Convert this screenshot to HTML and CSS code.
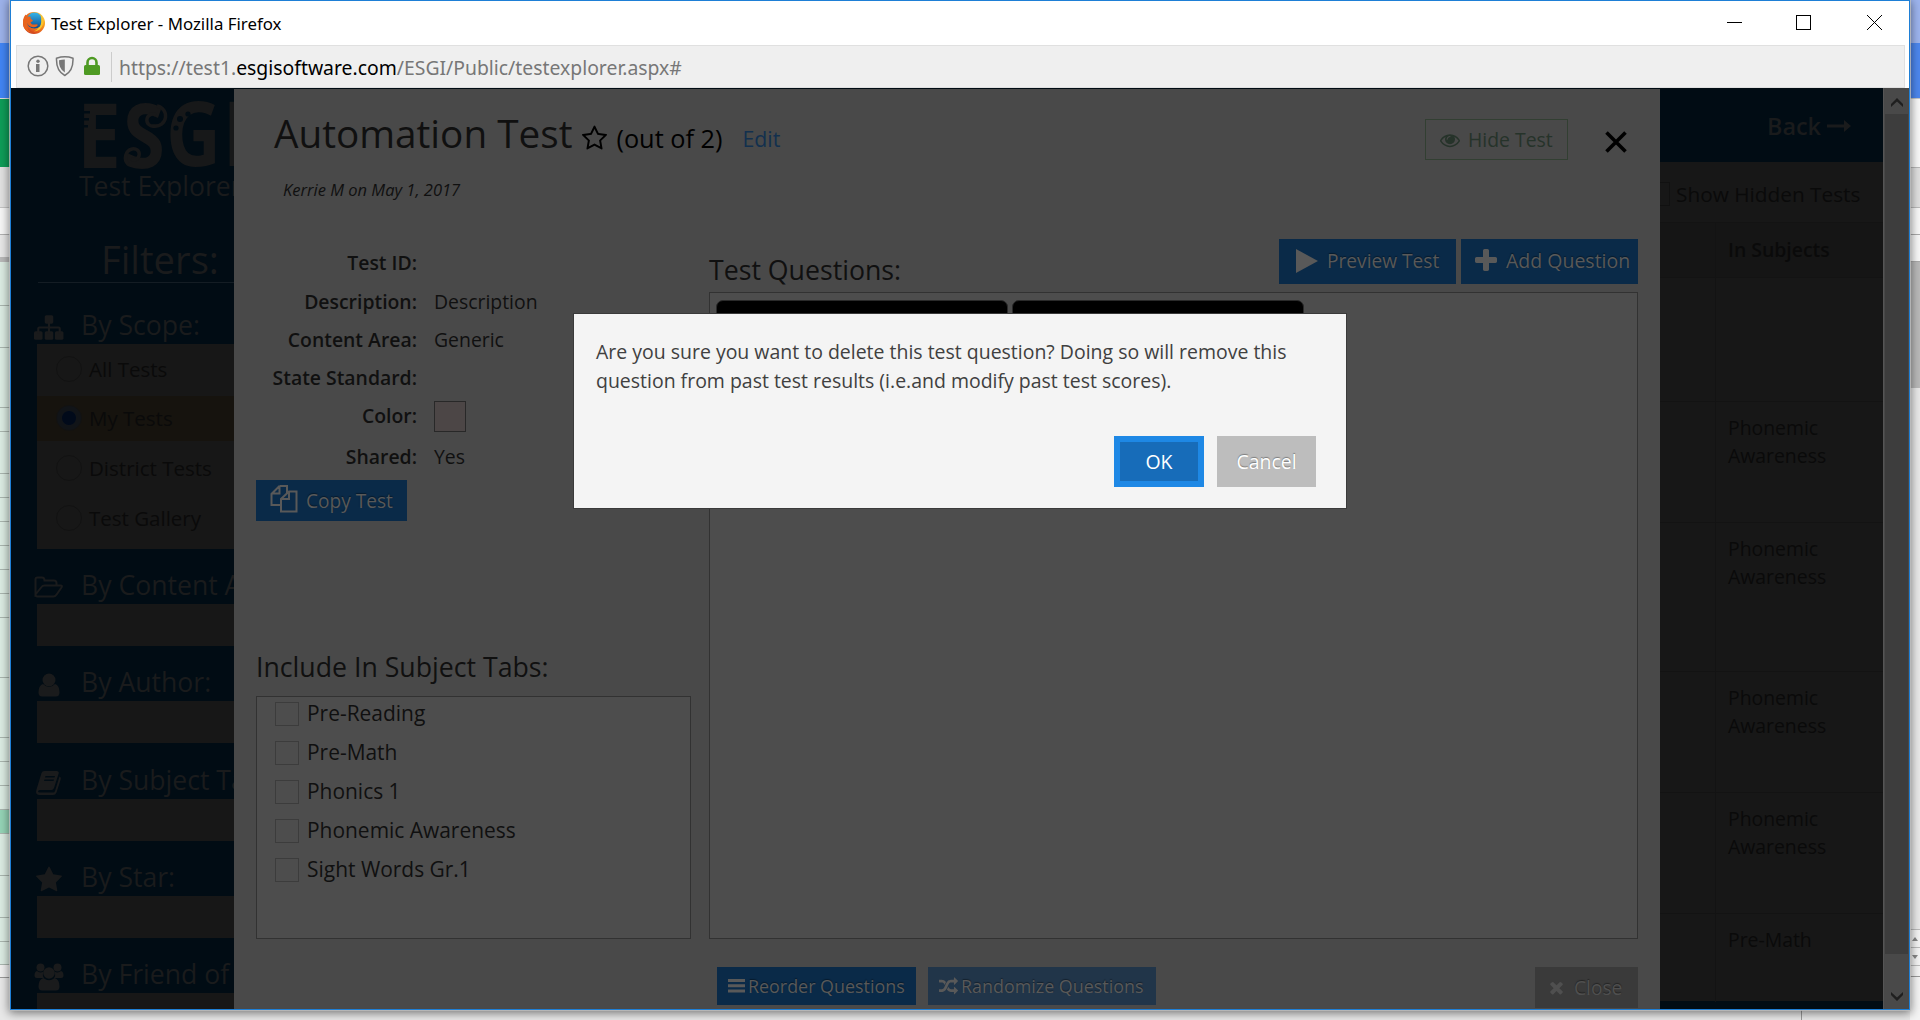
FILE: index.html
```html
<!DOCTYPE html>
<html lang="en">
<head>
<meta charset="utf-8">
<title>Test Explorer</title>
<link rel="stylesheet" href="styles.css">
</head>
<body>
<svg width="0" height="0" class="defs" aria-hidden="true">
  <symbol id="i-star-o" viewBox="0 0 1792 1792"><path d="M1201 1004l306-297-422-62-189-382-189 382-422 62 306 297-73 421 378-199 377 199zm527-357q0 22-26 48l-363 354 86 500q1 7 1 20 0 50-41 50-19 0-40-12l-449-236-449 236q-22 12-40 12-21 0-31.500-14.500t-10.500-35.500q0-6 2-20l86-500-364-354q-25-27-25-48 0-37 56-46l502-73 225-455q19-41 49-41t49 41l225 455 502 73q56 9 56 46z"/></symbol>
  <symbol id="i-star" viewBox="0 0 1792 1792"><path d="M1728 647q0 22-26 48l-363 354 86 500q1 7 1 20 0 21-10.500 35.500t-30.500 14.500q-19 0-40-12l-449-236-449 236q-22 12-40 12-21 0-31.500-14.500t-10.500-35.500q0-6 2-20l86-500-364-354q-25-27-25-48 0-37 56-46l502-73 225-455q19-41 49-41t49 41l225 455 502 73q56 9 56 46z"/></symbol>
  <symbol id="i-eye" viewBox="0 0 1792 1792"><path d="M1664 960q-152-236-381-353 61 104 61 225 0 185-131.500 316.500t-316.500 131.500-316.500-131.500-131.500-316.500q0-121 61-225-229 117-381 353 133 205 333.500 326.500t434.500 121.500 434.500-121.500 333.500-326.500zm-720-384q0-20-14-34t-34-14q-125 0-214.500 89.500t-89.500 214.500q0 20 14 34t34 14 34-14 14-34q0-86 61-147t147-61q20 0 34-14t14-34zm848 384q0 34-20 69-140 230-376.500 368.500t-499.500 138.500-499.500-139-376.500-368q-20-35-20-69t20-69q140-229 376.500-368t499.500-139 499.500 139 376.500 368q20 35 20 69z"/></symbol>
  <symbol id="i-plus" viewBox="0 0 1792 1792"><path d="M1600 736v192q0 40-28 68t-68 28h-416v416q0 40-28 68t-68 28h-192q-40 0-68-28t-28-68v-416h-416q-40 0-68-28t-28-68v-192q0-40 28-68t68-28h416v-416q0-40 28-68t68-28h192q40 0 68 28t28 68v416h416q40 0 68 28t28 68z"/></symbol>
  <symbol id="i-random" viewBox="0 0 1792 1792"><path d="M666 481q-60 92-137 273-22-45-37-72.500t-40.500-63.500-51-56.500-63-35-81.500-14.500h-224q-14 0-23-9t-9-23v-192q0-14 9-23t23-9h224q250 0 410 225zm1126 799q0 14-9 23l-320 320q-9 9-23 9-13 0-22.500-9.500t-9.500-22.500v-192q-32 0-85 .5t-81 1-73-1-71-5-64-10.500-63-18.500-58-28.500-59-40-55-53.500-56-69.500q59-93 136-273 22 45 37 72.500t40.500 63.500 51 56.500 63 35 81.500 14.500h256v-192q0-14 9-23t23-9q12 0 24 10l319 319q9 9 9 23zm0-896q0 14-9 23l-320 320q-9 9-23 9-13 0-22.500-9.500t-9.500-22.500v-192h-256q-48 0-87 15t-69 45-51 61.500-45 77.500q-32 62-78 171-29 66-49.500 111t-54 105-64 100-74 83-90 68.500-106.500 42-128 16.500h-224q-14 0-23-9t-9-23v-192q0-14 9-23t23-9h224q48 0 87-15t69-45 51-61.500 45-77.500q32-62 78-171 29-66 49.500-111t54-105 64-100 74-83 90-68.500 106.500-42 128-16.500h256v-192q0-14 9-23t23-9q12 0 24 10l319 319q9 9 9 23z"/></symbol>
  <symbol id="i-times" viewBox="0 0 1792 1792"><path d="M1490 1322q0 40-28 68l-136 136q-28 28-68 28t-68-28l-294-294-294 294q-28 28-68 28t-68-28l-136-136q-28-28-28-68t28-68l294-294-294-294q-28-28-28-68t28-68l136-136q28-28 68-28t68 28l294 294 294-294q28-28 68-28t68 28l136 136q28 28 28 68t-28 68l-294 294 294 294q28 28 28 68z"/></symbol>
</svg>

<div class="desktop">
  <div class="strip strip-left">
    <i class="l1"></i><i class="l2"></i><i class="l3"></i><i class="l4"></i><i class="l5"></i><i class="l6"></i>
    <i class="cell" style="height:44px"></i><i class="cell" style="height:42px"></i><i class="cell" style="height:60px"></i><i class="cell" style="height:24px"></i><i class="cell" style="height:42px"></i><i class="cell" style="height:24px"></i><i class="cell" style="height:24px"></i><i class="cell" style="height:24px"></i><i class="cell" style="height:24px"></i><i class="cell" style="height:24px"></i><i class="cell" style="height:24px"></i><i class="cell" style="height:60px"></i><i class="cell" style="height:60px"></i><i class="cell" style="height:24px"></i><i class="cell" style="height:24px"></i><i class="cell" style="height:24px"></i><i class="cell picked" style="height:24px"></i><i class="cell" style="height:42px"></i><i class="cell" style="height:42px"></i><i class="cell" style="height:24px"></i><i class="cell" style="height:23px"></i><i class="tabs"></i>
  </div>
  <div class="under"><i class="under-left"></i><i class="under-right"></i></div>
  <div class="strip strip-right">
    <i class="r1"></i><i class="r2"></i><i class="r3"></i><i class="r4"></i><i class="r5"></i><i class="r5"></i><i class="r6"></i><i class="r7"></i>
    <i class="spin"><svg width="6" height="4"><path d="M0 4L3 0L6 4z"/></svg></i><i class="spin"><svg width="6" height="4"><path d="M0 0L3 4L6 0z"/></svg></i><i class="r8"></i><i class="r9"></i>
  </div>
</div>

<div class="window">
  <div class="titlebar">
    <svg class="firefox" width="22" height="22" viewBox="0 0 22 22">
      <defs>
        <radialGradient id="fx" cx=".75" cy=".3" r=".85"><stop offset="0" stop-color="#ffe14d"/><stop offset=".4" stop-color="#f9a01b"/><stop offset=".75" stop-color="#e2571f"/><stop offset="1" stop-color="#b8321b"/></radialGradient>
        <linearGradient id="globe" x1="0" y1="0" x2="0" y2="1"><stop offset="0" stop-color="#35b4e8"/><stop offset="1" stop-color="#0b4a8e"/></linearGradient>
      </defs>
      <circle cx="11" cy="11" r="11" fill="url(#fx)"/>
      <circle cx="11.500" cy="8.600" r="8" fill="url(#globe)"/>
      <path d="M1 5L2.500 2.500L4 5Q6 3.800 8 5Q6.500 6.500 8.500 7.200L10 8.500Q9 10 7.500 10Q8 13 12 12.500Q14 12 15 13Q13 16 9 15Q5 14 4.500 11Q3 18 9 21Q0 19 0 11Q0 7 1 5z" fill="#e8641d"/>
      <path d="M17.500 3Q21 6 20 12Q18 19 11 19.500Q18 16 18.200 10Q18.500 6 17.500 3z" fill="#fbc52d"/>
    </svg>
    <span class="window-title">Test Explorer - Mozilla Firefox</span>
    <svg class="controls" width="156" height="16" viewBox="0 0 156 16" shape-rendering="crispEdges">
      <path d="M0 7.500H15" stroke="#000"/>
      <rect x="69.500" y=".5" width="14" height="14" fill="none" stroke="#000"/>
      <path d="M140 0l15 15M155 0l-15 15" stroke="#000" shape-rendering="auto"/>
    </svg>
  </div>
  <div class="urlbar">
    <svg class="url-icons" width="74" height="22" viewBox="0 0 74 22">
      <circle cx="11" cy="11" r="9.800" fill="none" stroke="#777" stroke-width="1.500"/>
      <circle cx="11" cy="6.300" r="1.700" fill="#777"/><path d="M9 9h3.500v8H9z" fill="#777"/>
      <path d="M29.500 3.200Q38 .5 46 3.200Q46.500 16 37.800 20.500Q29 16 29.500 3.200z" fill="none" stroke="#777" stroke-width="1.500"/>
      <path d="M32 5.200Q35 4.500 37.800 4.400V17.500Q31.500 13.500 32 5.200z" fill="#777"/>
      <rect x="57" y="10" width="16" height="10" rx="1.500" fill="#4e9a23"/>
      <path d="M60.500 11V7.500a4.500 4.500 0 0 1 9 0V11" fill="none" stroke="#4e9a23" stroke-width="2.600"/>
    </svg>
    <span class="url">https://test1.<b>esgisoftware.com</b>/ESGI/Public/testexplorer.aspx#</span>
  </div>

  <div class="page">
    <aside class="sidebar">
      <svg class="logo" width="154" height="72" viewBox="80 100 154 72">
        <g fill="#171819" font-family="Open Sans" font-weight="700" font-size="90">
          <text x="77" y="167" textLength="44" lengthAdjust="spacingAndGlyphs">E</text>
          <text x="123" y="167" textLength="42" lengthAdjust="spacingAndGlyphs">S</text>
          <text x="166" y="165" textLength="55" lengthAdjust="spacingAndGlyphs">G</text>
          <text x="222" y="165" textLength="28" lengthAdjust="spacingAndGlyphs">I</text>
        </g>
        <g fill="none" stroke="#171819" stroke-width="3.500">
          <path d="M157 105a10 10 0 0 1-3 20a6 6 0 1 1 2-11"/>
          <path d="M128 163a9 9 0 0 1 4-15a5.500 5.500 0 1 1-1 10"/>
        </g>
        <g fill="#010c14"><circle cx="188" cy="113" r="2.600"/><circle cx="180" cy="118" r="3"/><circle cx="176" cy="127" r="2.600"/><path d="M82 110h8v2.500h-8zM82 117h7v2.500h-7zM81 124h7v2.500h-7z"/></g>
      </svg>
      <div class="product">Test Explorer</div>
      <h2 class="filters">Filters:</h2>

      <h3 class="filter-head first"><svg width="28" height="24" viewBox="0 0 28 24"><rect x="10" y="0" width="8" height="8" rx="1.500"/><rect x="0" y="15" width="8" height="8" rx="1.500"/><rect x="10" y="15" width="8" height="8" rx="1.500"/><rect x="19.500" y="15" width="8" height="8" rx="1.500"/><path d="M14 6V17M4 17V12.500Q4 11.500 5 11.500H23Q24 11.500 24 12.500V17" class="line"/></svg><span>By Scope:</span></h3>
      <div class="scope">
        <label class="all"><i class="radio"></i>All Tests</label>
        <label class="selected"><i class="radio on"></i>My Tests</label>
        <label><i class="radio"></i>District Tests</label>
        <label><i class="radio"></i>Test Gallery</label>
      </div>

      <h3 class="filter-head"><svg width="30" height="24" viewBox="0 0 30 24"><path class="line" d="M1.500 18V3.500Q1.500 1.500 3.500 1.500H8Q10.500 1.500 10.500 4.500H20Q22.500 4.500 22.500 7V9.500M1.500 18.500L7.500 11Q8.500 9.500 10.500 9.500H26.500Q28.800 9.500 27.500 11.500L23 18Q21.500 20.500 19.500 20.500H3.500Q1.500 20.500 1.500 18z"/></svg><span>By Content Area:</span></h3>
      <div class="combo"></div>
      <h3 class="filter-head"><svg width="30" height="24" viewBox="0 0 30 24"><circle cx="15" cy="7" r="6.500"/><path d="M9 11Q15 17 21 11Q25.500 12 25.500 19.500Q25.500 23.500 22 23.500H8Q4.500 23.500 4.500 19.500Q4.500 12 9 11z"/></svg><span>By Author:</span></h3>
      <div class="combo"></div>
      <h3 class="filter-head tall"><svg width="30" height="24" viewBox="0 0 30 24"><path fill-rule="evenodd" d="M10.500 0H23Q25.500 .5 24.500 3L20 17Q19.300 19 17.500 19H6Q4 19.200 4 20.500Q4.300 21.500 6 21.500H19Q20.500 21.500 21 20L25.500 5.500Q27.500 6.500 26.500 9L22.500 21.500Q21.500 24 19 24H5Q1 23.500 2.500 18.500L7.500 2Q8 .2 10.500 0zM11.500 5L11 6.500H20.500L21 5zM10.500 8.500L10 10H19.500L20 8.500z"/></svg><span>By Subject Tab:</span></h3>
      <div class="combo"></div>
      <h3 class="filter-head"><svg width="30" height="30"><use href="#i-star"/></svg><span>By Star:</span></h3>
      <div class="combo"></div>
      <h3 class="filter-head"><svg width="30" height="28" viewBox="0 0 30 28"><circle cx="6.500" cy="4.500" r="4"/><circle cx="23.500" cy="4.500" r="4"/><path d="M3 8Q6 10.500 9.500 8.500Q8 12.500 10 15H3Q.5 15 .5 12.500Q.5 8.500 3 8zM27 8Q24 10.500 20.500 8.500Q22 12.500 20 15H27Q29.500 15 29.500 12.500Q29.500 8.500 27 8z"/><circle cx="15" cy="10" r="5.800"/><path d="M9.500 15Q15 19.500 20.500 15Q25.500 16 25.500 23.500Q25.500 27.500 22 27.500H8Q4.500 27.500 4.500 23.500Q4.500 16 9.500 15z"/></svg><span>By Friend of</span></h3>
      <div class="combo"></div>
    </aside>

    <main class="panel">
      <header class="panel-head">
        <h1>Automation Test</h1>
        <svg class="fav" width="27" height="27"><use href="#i-star-o"/></svg>
        <span class="outof">(out of 2)</span>
        <a class="link">Edit</a>
        <button class="hide"><svg width="20" height="20"><use href="#i-eye"/></svg>Hide Test</button>
        <svg class="dismiss" width="22" height="22" viewBox="0 0 22 22"><path d="M1.500 1.500L20.500 20.500M20.500 1.500L1.500 20.500" stroke="#000" stroke-width="3.600"/></svg>
      </header>
      <p class="author">Kerrie M on May 1, 2017</p>

      <div class="columns">
        <section class="details">
          <dl>
            <dt>Test ID:</dt><dd></dd>
            <dt>Description:</dt><dd>Description</dd>
            <dt>Content Area:</dt><dd>Generic</dd>
            <dt>State Standard:</dt><dd></dd>
            <dt>Color:</dt><dd><i class="swatch"></i></dd>
            <dt>Shared:</dt><dd>Yes</dd>
          </dl>
          <div class="detail-actions">
            <button class="btn copy"><svg width="28" height="28" viewBox="0 0 28 28"><path d="M9.500 1H17V8.500M9.500 1V8.500H1.500M9.500 1L1.500 9V20H10M19 6.500H26.500V26.500H11V14L19 6.500zM19 6.500V14H11" fill="none" stroke="currentColor" stroke-width="2"/></svg>Copy Test</button>
            <a class="link">Edit</a>
          </div>
          <h2>Include In Subject Tabs:</h2>
          <div class="subjects">
            <label><i></i>Pre-Reading</label>
            <label><i></i>Pre-Math</label>
            <label><i></i>Phonics 1</label>
            <label><i></i>Phonemic Awareness</label>
            <label><i></i>Sight Words Gr.1</label>
          </div>
        </section>
        <section class="questions">
          <div class="questions-head">
            <h2>Test Questions:</h2>
            <button class="btn preview"><svg width="22" height="24" viewBox="0 0 22 24"><path d="M0 0L22 12L0 24z"/></svg>Preview Test</button>
            <button class="btn add"><svg width="28" height="28"><use href="#i-plus"/></svg>Add Question</button>
          </div>
          <div class="cards"><i></i><i></i></div>
        </section>
      </div>

      <footer>
        <button class="btn reorder"><svg width="17" height="14" viewBox="0 0 17 14"><path d="M0 0h17v3H0zM0 5.300h17v3H0zM0 10.600h17v3H0z"/></svg>Reorder Questions</button>
        <button class="btn randomize"><svg width="19" height="19"><use href="#i-random"/></svg>Randomize Questions</button>
        <button class="btn close"><svg width="19" height="19"><use href="#i-times"/></svg>Close</button>
      </footer>
    </main>

    <aside class="results">
      <div class="back">Back<svg width="24" height="12" viewBox="0 0 24 12"><path d="M0 4.500H17V0L24 6L17 12V7.500H0z"/></svg></div>
      <div class="hidden-toggle"><i></i>Show Hidden Tests</div>
      <div class="row head"><span></span><span>In Subjects</span></div>
      <div class="row" style="height:124px"><span></span><span></span></div>
      <div class="row" style="height:121px"><span></span><span>Phonemic<br>Awareness</span></div>
      <div class="row" style="height:149px"><span></span><span>Phonemic<br>Awareness</span></div>
      <div class="row" style="height:121px"><span></span><span>Phonemic<br>Awareness</span></div>
      <div class="row" style="height:121px"><span></span><span>Phonemic<br>Awareness</span></div>
      <div class="row" style="height:89px"><span></span><span>Pre-Math</span></div>
    </aside>

    <div class="scrollbar">
      <i class="arrow"><svg width="12" height="9" viewBox="0 0 12 9"><path d="M0 9V6L6 0L12 6V9L6 3.500z"/></svg></i>
      <i class="thumb"></i>
      <i class="arrow end"><svg width="12" height="9" viewBox="0 0 12 9"><path d="M0 0V3L6 9L12 3V0L6 5.500z"/></svg></i>
    </div>
  </div>

  <div class="dialog">
    <p>Are you sure you want to delete this test question? Doing so will remove this<br>question from past test results (i.e.and modify past test scores).</p>
    <div class="dialog-actions"><button class="ok">OK</button><button class="cancel">Cancel</button></div>
  </div>
</div>
</body>
</html>
```
FILE: styles.css
```css
* { box-sizing: border-box; }
body { margin: 0; width: 1920px; height: 1020px; overflow: hidden; position: relative; font-family: "Open Sans", "Noto Sans", sans-serif; font-size: 19.400px; }
h1, h2, h3, p, dl, dd { margin: 0; font-weight: 400; }
i { font-style: normal; display: block; flex: none; }
svg { flex: none; display: block; fill: currentColor; }
button { font: inherit; border: 0; padding: 0; display: flex; align-items: center; white-space: nowrap; }
.defs { position: absolute; }

/* windows behind the browser */
.desktop { display: flex; height: 1020px; background: #eee; }
.strip { display: flex; flex-direction: column; height: 1020px; }
.strip-left { width: 10px; }
.under { flex: 1; display: flex; align-items: flex-end; }
.under i { height: 20px; background: #e8e8e8; }
.under-left { width: 1792px; border-right: 1px solid #999; }
.under-right { flex: 1; background: #f4f4f4; }
.l1 { height: 43px; background: #9db2ea; }
.l2 { height: 55px; background: #4285f4; }
.l3 { height: 69px; background: #0f9d58; border-top: 1px solid #ddd; }
.l4 { height: 41px; background: #e2e2e2; border-bottom: 1px solid #c4c4c4; }
.l5 { height: 49px; background: linear-gradient(#f7f7f7 26px, #b0b0b0 26px, #b0b0b0 27px, #e8e8e8 27px); }
.l6 { height: 5px; background: #b9b9b9; }
.cell { background: #dcece3; border-bottom: 1px solid #a9b5ae; }
.picked { background: #95d4b6; }
.tabs { flex: 1; background: linear-gradient(#f1f1f1 12px, #999 12px, #999 13px, #e8e8e8 13px); }
.strip-right { width: 10px; }
.r1 { height: 43px; background: #9db4ee; }
.r2 { height: 56px; background: #4d87ee; border-bottom: 1px solid #c8c8c8; }
.r3 { height: 69px; background: #f8f8f8; border-bottom: 1px solid #b8b8b8; }
.r4 { height: 40px; background: #e0e0e0; border-bottom: 1px solid #bbb; }
.r5 { height: 27px; background: #f8f8f8; border-bottom: 1px solid #aaa; }
.r6 { height: 126px; background: #b9b9b9; }
.r7 { height: 542px; background: #e9e9e9; border-bottom: 1px solid #bbb; }
.spin { height: 18px; background: #f4f4f4; border-bottom: 1px solid #bbb; display: flex; align-items: center; justify-content: center; color: #888; }
.r8 { height: 11px; background: #f4f4f4; border-bottom: 1px solid #999; }
.r9 { flex: 1; background: #f4f4f4; }

/* browser window */
.window { position: absolute; left: 10px; top: 0; width: 1900px; height: 1010px; border: 1px solid #1e7fd6; box-shadow: 0 0 0 1px rgba(190,190,190,.8), 0 2px 9px 1px rgba(0,0,0,.5); background: #fff; }
.titlebar { height: 44px; display: flex; align-items: center; padding: 0 26px 0 12px; color: #000; font: 16.850px/44px "Noto Sans", sans-serif; }
.firefox { margin-top: -1px; }
.window-title { margin: 1px 0 0 6px; white-space: nowrap; }
.controls { margin: 0 0 0 auto; }
.urlbar { height: 43px; margin: 0 4px 0 5px; border: 1px solid #e0e0e0; background: #efefef; display: flex; align-items: center; font: 19.360px/42px "Noto Sans", sans-serif; color: #777; }
.url-icons { margin: -1px 10px 0 10px; }
.url { border-left: 1px solid #ccc; line-height: 28px; padding: 2px 0 0 7px; white-space: nowrap; }
.url b { font-weight: 400; color: #000; }

.page { display: flex; height: 921px; overflow: hidden; background: #010c14; }

/* filters */
.sidebar { width: 223px; overflow: hidden; background: #010c14; color: #1a1b1c; white-space: nowrap; }
.logo { margin: 13px 0 0 69px; overflow: hidden; }
.product { font-size: 26.500px; line-height: 36px; margin: -5px 0 0 68px; }
.filters { font-size: 38.200px; line-height: 46px; margin: 32px 0 0 27px; padding: 0 0 0 63px; border-bottom: 1px solid #141d24; }
.filter-head { height: 55px; display: flex; align-items: flex-end; padding: 0 0 2px 23px; font-size: 26.600px; line-height: 34px; }
.filter-head.first { height: 61px; }
.filter-head.tall { height: 56px; }
.filter-head svg { width: 30px; height: 28px; margin: 0 17px 0 0; }
.filter-head .line { fill: none; stroke: currentColor; stroke-width: 2; }
.scope { margin-left: 26px; height: 205px; background: #171717; color: #0a0a0a; }
.scope label { height: 50px; display: flex; align-items: center; padding-left: 19px; font-size: 20.500px; }
.scope .all { height: 52px; padding-bottom: 3px; }
.scope .selected { height: 45px; background: #16130e; margin: 0 0 2px; padding-bottom: 2px; }
.radio { width: 26px; height: 26px; border-radius: 50%; border: 1px solid #121212; margin-right: 7px; }
.radio.on { background: radial-gradient(circle, #010a1a 6.500px, #111418 7.500px); }
.combo { margin-left: 26px; height: 42px; background: #171717; }

/* test panel */
.panel { width: 1426px; margin-top: 1px; padding: 18px 22px 0; background: #494949; color: #101010; display: flex; flex-direction: column; }
.panel-head { display: flex; height: 52px; line-height: 52px; align-items: baseline; padding-left: 18px; white-space: nowrap; }
.panel-head h1 { font-size: 38.700px; }
.fav { color: #000; margin: 0 8px 0 9px; align-self: flex-start; position: relative; top: 18px; }
.outof { font-size: 25.300px; color: #000; }
.link { font-size: 21.300px; color: #12304e; margin-left: 20px; position: relative; top: -1px; }
.hide { margin: 12px 37px 0 auto; align-self: flex-start; width: 143px; height: 41px; border: 1px solid #323f32; background: none; color: #26332a; padding-left: 14px; gap: 8px; }
.dismiss { align-self: flex-start; margin: 24px 11px 0 0; }
.author { font-size: 16.500px; font-style: italic; line-height: 24px; margin: 19px 0 0 27px; }
.columns { display: flex; gap: 18px; height: 700px; margin-top: 37px; }
.details { width: 435px; display: flex; flex-direction: column; }
dl { display: grid; grid-template-columns: 161px 1fr; column-gap: 17px; grid-template-rows: 39px 38px 38px 38px 41px 38px; padding-top: 5px; line-height: 38px; height: 241px; }
dt { text-align: right; font-weight: 600; }
.swatch { width: 32px; height: 31px; margin-top: 4px; background: #4c4646; border: 1px solid #282828; }
.btn { background: #0a2a48; color: #595959; text-shadow: 0 -1px 1px rgba(0,0,0,.4); }
.detail-actions { display: flex; justify-content: space-between; align-items: flex-start; padding-right: 18px; }
.copy { width: 151px; height: 41px; padding-left: 14px; gap: 8px; font-size: 19.100px; }
.copy svg { margin-top: -4px; }
.detail-actions .link { font-size: 19.300px; line-height: 46px; color: #0d3150; }
.columns h2 { font-size: 26.700px; line-height: 36px; }
.details h2 { margin: auto 0 11px; }
.subjects { height: 243px; border: 1px solid #323232; background: #4d4d4d; padding: 0 0 0 18px; font-size: 20.950px; }
.subjects label { height: 39px; display: flex; align-items: center; gap: 8px; padding-bottom: 8px; }
.subjects label i { width: 24px; height: 24px; border: 1px solid #3c3c3c; margin-top: 3px; }
.questions { width: 929px; display: flex; flex-direction: column; }
.questions-head { height: 53px; display: flex; }
.questions-head h2 { margin: 13px auto 0 0; }
.questions-head .btn { height: 45px; padding-bottom: 1px; }
.preview { width: 177px; padding-left: 17px; gap: 9px; margin-right: 5px; font-size: 19.150px; }
.questions-head .add { width: 177px; padding-left: 11px; padding-bottom: 2px; gap: 6px; font-size: 19.500px; }
.cards { flex: 1; border: 1px solid #323232; background: #4d4d4d; padding: 7px 7px 7px 6px; display: flex; gap: 4px; }
.cards i { width: 292px; height: 190px; border-radius: 7px; background: #000; border: 1px solid #2a2a2a; }
footer { display: flex; margin-top: 28px; padding-left: 461px; font-size: 17.900px; }
.reorder, .randomize { height: 38px; padding-left: 11px; }
.reorder { width: 199px; gap: 3px; margin-right: 12px; }
.randomize { width: 228px; background: #213549; gap: 3px; }
.close { width: 103px; height: 41px; margin-left: auto; background: #3a3a3a; color: #4f4f4f; padding-left: 12px; gap: 8px; font-size: 19.200px; }

/* result list under the panel */
.results { width: 223px; height: 913px; background: #171717; color: #0a0a0a; white-space: nowrap; }
.back { height: 74px; background: #010c14; color: #1a1b1c; display: flex; align-items: center; gap: 6px; padding: 2px 0 0 107px; font-weight: 600; font-size: 23.400px; }
.hidden-toggle { height: 60px; display: flex; align-items: center; gap: 6px; font-size: 20.800px; padding-top: 3px; }
.hidden-toggle i { width: 10px; height: 24px; border: 1px solid #111; border-left: 0; }
.row { display: flex; border-top: 1px solid #131313; line-height: 28px; }
.row span:first-child { width: 56px; border-right: 1px solid #131313; }
.row span:last-child { padding: 12px 0 0 12px; }
.row.head { height: 55px; background: #151515; font-weight: 600; line-height: 30px; }

.scrollbar { width: 26px; background: #494949; border-left: 1px solid #555; display: flex; flex-direction: column; }
.thumb { background: #3d3d3d; height: 840px; margin: 0 1px; }
.arrow { height: 26px; display: flex; align-items: center; justify-content: center; color: #1f1f1f; padding-top: 3px; }
.arrow.end { height: 55px; padding-top: 30px; }

.dialog { position: absolute; left: 563px; top: 313px; width: 772px; height: 194px; background: #f4f4f4; color: #404040; box-shadow: 0 0 0 1px #3a3a3a; padding: 23px 30px 0 22px; line-height: 29px; font-size: 19.480px; white-space: nowrap; }
.dialog-actions { display: flex; justify-content: flex-end; gap: 13px; margin-top: 41px; color: #fff; }
.dialog button { height: 51px; justify-content: center; color: #fff; }
.ok { width: 90px; background: #176cb9; border: 6px solid #1e88e5; }
.cancel { width: 99px; background: #bdbdbd; text-shadow: 0 -1px 1px rgba(0,0,0,.35); }
```
